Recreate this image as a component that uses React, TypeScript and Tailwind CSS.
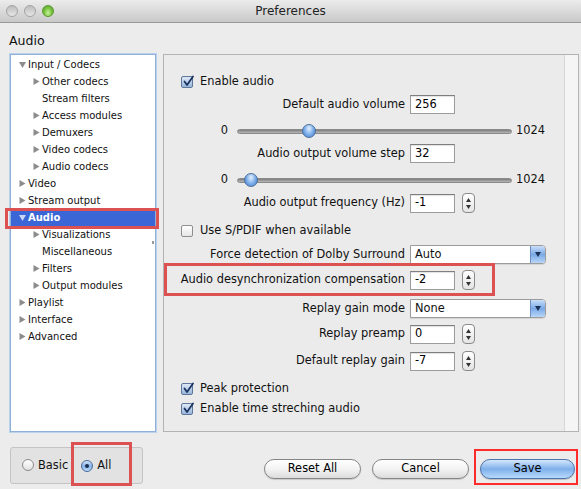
import React from 'react';

interface TreeItem {
  label: string;
  level: number;
  arrow?: 'right' | 'down';
  selected?: boolean;
}

const tree: TreeItem[] = [
  { label: 'Input / Codecs', level: 0, arrow: 'down' },
  { label: 'Other codecs', level: 1, arrow: 'right' },
  { label: 'Stream filters', level: 1 },
  { label: 'Access modules', level: 1, arrow: 'right' },
  { label: 'Demuxers', level: 1, arrow: 'right' },
  { label: 'Video codecs', level: 1, arrow: 'right' },
  { label: 'Audio codecs', level: 1, arrow: 'right' },
  { label: 'Video', level: 0, arrow: 'right' },
  { label: 'Stream output', level: 0, arrow: 'right' },
  { label: 'Audio', level: 0, arrow: 'down', selected: true },
  { label: 'Visualizations', level: 1, arrow: 'right' },
  { label: 'Miscellaneous', level: 1 },
  { label: 'Filters', level: 1, arrow: 'right' },
  { label: 'Output modules', level: 1, arrow: 'right' },
  { label: 'Playlist', level: 0, arrow: 'right' },
  { label: 'Interface', level: 0, arrow: 'right' },
  { label: 'Advanced', level: 0, arrow: 'right' },
];

function Arrow({ dir, light }: { dir: 'right' | 'down'; light?: boolean }) {
  const fill = light ? '#c9d6f5' : '#8c8c8c';
  return (
    <svg width="7" height="7" viewBox="0 0 7 7">
      {dir === 'right' ? <polygon points="0.5,0 6.5,3.5 0.5,7" fill={fill} /> : <polygon points="0,1 7,1 3.5,7" fill={fill} />}
    </svg>
  );
}

function Checkbox({ checked }: { checked?: boolean }) {
  if (!checked) {
    return <div className="w-[12px] h-[12px] rounded-[2px] border border-[#8f8f8f] bg-linear-to-b from-white to-[#e6e6e6]" />;
  }
  return (
    <div className="relative w-[12px] h-[12px] rounded-[2px] border border-[#5d7699] bg-linear-to-b from-[#dfe9f6] to-[#98b6db]">
      <svg className="absolute -top-[2px] left-[0px]" width="13" height="13" viewBox="0 0 13 13">
        <path d="M2.5 6.5 L5 10 L11 1.5" fill="none" stroke="#1b3461" strokeWidth="1.8" strokeLinecap="round" strokeLinejoin="round" />
      </svg>
    </div>
  );
}

function TextBox({ value, spinner }: { value: string; spinner?: boolean }) {
  return (
    <div className="flex items-center">
      <div className="w-[45px] h-[19px] bg-white border border-[#9c9c9c] border-t-[#7e7e7e] flex items-center pl-[4px] text-black shadow-[inset_0_1px_1px_rgba(0,0,0,0.12)]">
        {value}
      </div>
      {spinner && (
        <div className="ml-[7px] w-[13px] h-[20px] rounded-[4px] border border-[#8a8a8a] bg-linear-to-b from-white to-[#e4e4e4] flex flex-col items-center justify-center gap-[3px]">
          <svg width="5" height="4" viewBox="0 0 5 4"><polygon points="2.5,0 5,4 0,4" fill="#333" /></svg>
          <svg width="5" height="4" viewBox="0 0 5 4"><polygon points="0,0 5,0 2.5,4" fill="#333" /></svg>
        </div>
      )}
    </div>
  );
}

function Select({ value }: { value: string }) {
  return (
    <div className="w-[136px] h-[19px] flex border border-[#9c9c9c] rounded-r-[4px] bg-white shadow-[0_1px_1px_rgba(0,0,0,0.1)]">
      <div className="flex-1 flex items-center pl-[4px]">{value}</div>
      <div className="w-[15px] h-full rounded-r-[3px] border-l border-[#6d8fc0] bg-linear-to-b from-[#c9defa] via-[#7aa9e6] to-[#b8d6f8] flex items-center justify-center">
        <svg width="6" height="5" viewBox="0 0 6 5"><polygon points="0,0 6,0 3,5" fill="#1c2f55" /></svg>
      </div>
    </div>
  );
}

function Slider({ pos }: { pos: number }) {
  return (
    <div className="flex items-center h-[18px]">
      <div className="w-[73px] pr-[9px] text-right">0</div>
      <div className="relative w-[275px] h-[5px] rounded-full bg-linear-to-b from-[#7d7d7d] to-[#b9b9b9] border border-[#8a8a8a]">
        <div
          className="absolute -top-[6px] w-[14px] h-[14px] rounded-full border border-[#4f6f9c] bg-radial-[at_50%_30%] from-[#e6f1fd] via-[#7fb0eb] to-[#3f78c8]"
          style={{ left: pos - 7 }}
        />
      </div>
      <div className="ml-[4px]">1024</div>
    </div>
  );
}

function LabeledRow({ label, children, h = 'h-[19px]' }: { label: string; children: React.ReactNode; h?: string }) {
  return (
    <div className={`flex items-center ${h}`}>
      <div className="w-[241px] text-right whitespace-nowrap">{label}</div>
      <div className="ml-[5px]">{children}</div>
    </div>
  );
}

function CheckRow({ label, checked }: { label: string; checked?: boolean }) {
  return (
    <div className="flex items-center h-[18px] pl-[17px] gap-[7px]">
      <Checkbox checked={checked} />
      <span>{label}</span>
    </div>
  );
}

function Button({ children, primary }: { children: React.ReactNode; primary?: boolean }) {
  return (
    <div
      className={
        primary
          ? 'w-[95px] h-[20px] rounded-full border border-[#4e73a8] bg-linear-to-b from-[#d4e7fc] via-[#7fb0ea] to-[#b7d9fb] flex items-center justify-center text-[11.4px] text-black shadow-[0_1px_1px_rgba(0,0,0,0.2)]'
          : 'w-[97px] h-[20px] rounded-full border border-[#858585] bg-linear-to-b from-white via-[#f3f3f3] to-[#dcdcdc] flex items-center justify-center text-[11.4px] text-black shadow-[0_1px_1px_rgba(0,0,0,0.15)]'
      }
    >
      {children}
    </div>
  );
}

export default function App() {
  return (
    <div className="w-[581px] h-[489px] bg-[#ececec] flex flex-col overflow-hidden text-[11.4px] text-[#111]" style={{ fontFamily: '"DejaVu Sans", "Lucida Grande", sans-serif' }}>
      {/* title bar */}
      <div className="h-[23px] shrink-0 grid grid-cols-[1fr_auto_1fr] items-center border-b border-[#9a9a9a] bg-linear-to-b from-[#ececec] to-[#c9c9c9]">
        <div className="flex items-center gap-[6px] pl-[6px]">
          <div className="w-[12px] h-[12px] rounded-full border border-[#a3a3a3] bg-linear-to-b from-[#bdbdbd] to-[#e6e6e6]" />
          <div className="w-[12px] h-[12px] rounded-full border border-[#a3a3a3] bg-linear-to-b from-[#bdbdbd] to-[#e6e6e6]" />
          <div className="w-[12px] h-[12px] rounded-full border border-[#5b9a2f] bg-radial-[at_50%_70%] from-[#c8f29a] via-[#7cc544] to-[#4d9a22]" />
        </div>
        <div className="text-[12px] text-[#222]">Preferences</div>
        <div />
      </div>

      <div className="pl-[9px] mt-[10px] h-[17px] text-[12.5px] flex items-center">Audio</div>

      {/* main area */}
      <div className="flex mt-[4px] pl-[10px] gap-[7px] h-[378px] shrink-0">
        {/* tree */}
        <div className="relative w-[146px] h-full bg-white border border-[#8fb0d8] shadow-[0_0_0_1px_#bcd2ec] text-[10px]">
          <div className="pt-[1px]">
            {tree.map((item) => (
              <div
                key={item.label}
                className={`relative flex items-center h-[17px] ${item.selected ? 'bg-[#3a66d6] text-white font-bold' : ''}`}
                style={{ paddingLeft: item.level === 0 ? 8 : 22 }}
              >
                <div className="w-[9px] flex items-center">{item.arrow && <Arrow dir={item.arrow} light={item.selected} />}</div>
                <span>{item.label}</span>
                {item.selected && <span className="absolute -left-[6px] -right-[4px] -top-[1px] -bottom-[3px] border-[3px] border-[#dc5151] pointer-events-none" />}
              </div>
            ))}
          </div>
          <div className="absolute right-[1px] top-[186px] w-[2px] h-[3px] bg-[#9a9a9a]" />
        </div>

        {/* settings panel */}
        <div className="w-[416px] h-full border border-[#b3b3b3] bg-[#ebebeb] flex">
          <div className="flex-1 flex flex-col pt-[18px]">
            <CheckRow label="Enable audio" checked />
            <div className="mt-[4px]"><LabeledRow label="Default audio volume"><TextBox value="256" /></LabeledRow></div>
            <div className="mt-[8px]"><Slider pos={71} /></div>
            <div className="mt-[4px]"><LabeledRow label="Audio output volume step"><TextBox value="32" /></LabeledRow></div>
            <div className="mt-[8px]"><Slider pos={13} /></div>
            <div className="mt-[4px]"><LabeledRow label="Audio output frequency (Hz)" h="h-[20px]"><TextBox value="-1" spinner /></LabeledRow></div>
            <div className="mt-[9px]"><CheckRow label="Use S/PDIF when available" /></div>
            <div className="mt-[5px]"><LabeledRow label="Force detection of Dolby Surround"><Select value="Auto" /></LabeledRow></div>
            <div className="relative mt-[6px]">
              <LabeledRow label="Audio desynchronization compensation" h="h-[20px]"><TextBox value="-2" spinner /></LabeledRow>
              <span className="absolute left-[0px] w-[331px] -top-[7px] -bottom-[6px] border-[3px] border-[#dc5151] pointer-events-none" />
            </div>
            <div className="mt-[9px]"><LabeledRow label="Replay gain mode"><Select value="None" /></LabeledRow></div>
            <div className="mt-[6px]"><LabeledRow label="Replay preamp" h="h-[20px]"><TextBox value="0" spinner /></LabeledRow></div>
            <div className="mt-[7px]"><LabeledRow label="Default replay gain" h="h-[20px]"><TextBox value="-7" spinner /></LabeledRow></div>
            <div className="mt-[9px]"><CheckRow label="Peak protection" checked /></div>
            <div className="mt-[2px]"><CheckRow label="Enable time streching audio" checked /></div>
          </div>
          <div className="w-[14px] h-full border-l border-[#d6d6d6] bg-[#f5f5f5]" />
        </div>
      </div>

      {/* bottom bar */}
      <div className="flex items-start flex-1 pl-[10px] pr-[6px]">
        <div className="w-[133px] h-[37px] mt-[15px] rounded-[3px] border border-[#c4c4c4] bg-[#e2e2e2] flex items-center">
          <div className="flex items-center pl-[11px] gap-[4px]">
            <div className="w-[12px] h-[12px] rounded-full border border-[#8a8a8a] bg-linear-to-b from-white to-[#e2e2e2]" />
            <span>Basic</span>
          </div>
          <div className="relative flex items-center h-[13px] ml-[13px] gap-[4px]">
            <div className="w-[12px] h-[12px] rounded-full border border-[#4a6c9c] bg-linear-to-b from-[#d6e6fa] via-[#87b3e8] to-[#bcd9f7] flex items-center justify-center">
              <div className="w-[4px] h-[4px] rounded-full bg-[#1a2d50]" />
            </div>
            <span>All</span>
            <span className="absolute -left-[10px] -right-[21px] -top-[17px] -bottom-[14px] border-[3px] border-[#dc5151] pointer-events-none" />
          </div>
        </div>
        <div className="flex-1" />
        <div className="flex items-center gap-[11px] mt-[27px]">
          <Button>Reset All</Button>
          <Button>Cancel</Button>
          <div className="relative">
            <Button primary>Save</Button>
            <span className="absolute -left-[6px] -right-[3px] -top-[10px] -bottom-[6px] border-[2px] border-[#ff2a2a] pointer-events-none" />
          </div>
        </div>
      </div>
    </div>
  );
}
